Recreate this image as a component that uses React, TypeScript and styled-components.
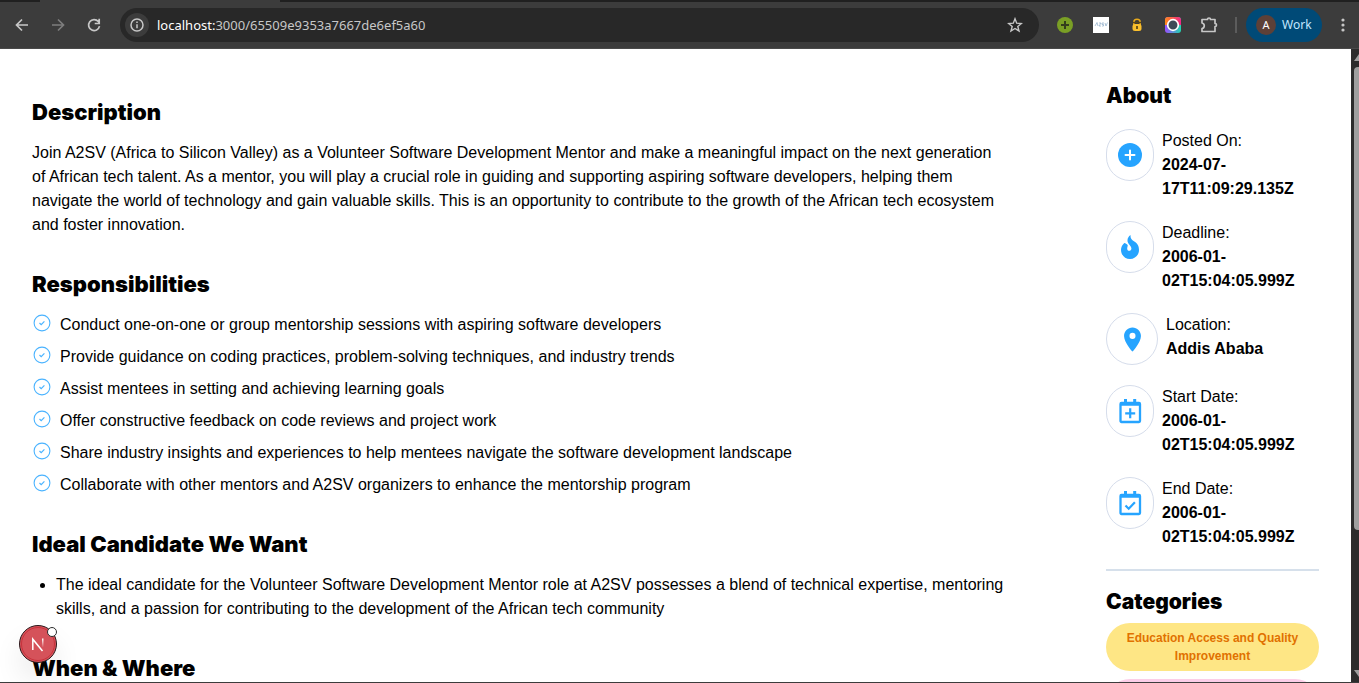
import React from "react";
import styled, { createGlobalStyle } from "styled-components";
import { MdLocationOn } from "react-icons/md";

const Global = createGlobalStyle`
  * { box-sizing: border-box; }
  body { margin: 0; background: #fff; color: #000; font-family: "Liberation Sans", Arial, sans-serif; font-size: 16px; line-height: 24px; }
  h2, p, ul, dl, dd, dt { margin: 0; padding: 0; }
  button { border: 0; padding: 0; background: none; font: inherit; color: inherit; }
`;

const Window = styled.div`
  height: 100vh;
  display: flex;
  flex-direction: column;
  overflow: hidden;
  border-bottom: 1px solid #3c3c3c;
`;

const TabStrip = styled.div`
  height: 2px;
  flex: none;
  display: flex;
  background: #202020;
`;

const ActiveTab = styled.div`
  margin-left: 40px;
  width: 240px;
  background: #3c3c3c;
`;

const Toolbar = styled.header`
  height: 47px;
  flex: none;
  display: flex;
  align-items: center;
  padding: 0 4px;
  background: #3c3c3c;
  border-bottom: 1px solid #4a4a4a;
  color: #c7c7c7;
`;

const NavButton = styled.button<{ $dim?: boolean }>`
  width: 36px;
  height: 34px;
  display: grid;
  place-items: center;
  color: ${(p) => (p.$dim ? "#7d7d7d" : "#c7c7c7")};
`;

const AddressBar = styled.div`
  flex: 1;
  height: 34px;
  margin: 0 8px;
  padding: 0 6px 0 5px;
  display: flex;
  align-items: center;
  gap: 8px;
  border-radius: 17px;
  background: #282828;
`;

const SiteInfo = styled.button`
  width: 24px;
  height: 24px;
  display: grid;
  place-items: center;
  border-radius: 50%;
  background: #3c3c3c;
`;

const Address = styled.div`
  flex: 1;
  font-family: "Noto Sans", "Open Sans", sans-serif;
  font-size: 13px;
  line-height: 20px;
  color: #c7c7c7;
  b { font-weight: 400; color: #fff; }
`;

const Profile = styled.button`
  height: 34px;
  width: 76px;
  margin: 0 9px;
  padding-left: 10px;
  display: flex;
  align-items: center;
  gap: 6px;
  border-radius: 17px;
  background: #004a77;
  color: #c2e7ff;
  font-family: "Noto Sans", sans-serif;
  font-size: 12px;
`;

const Avatar = styled.span`
  width: 20px;
  height: 20px;
  border-radius: 50%;
  background: #5d4037;
  color: #fff;
  font-size: 11px;
  line-height: 20px;
  text-align: center;
`;

const Divider = styled.span`
  width: 2px;
  height: 16px;
  margin-left: 8px;
  background: #5c5c5c;
`;

const MenuButton = styled.button`
  width: 24px;
  display: grid;
  place-items: center;
`;

const Body = styled.div`
  flex: 1;
  min-height: 0;
  display: flex;
`;

const Page = styled.div`
  flex: 1;
  min-width: 0;
  overflow: hidden;
  display: flex;
  gap: 100px;
  padding: 0 32px;
`;

const Main = styled.main`
  flex: 1;
  padding-top: 47px;
  display: flex;
  flex-direction: column;
  gap: 31px;
`;

const Heading = styled.h2<{ $side?: boolean }>`
  font-family: Inter, "Liberation Sans", sans-serif;
  font-size: ${(p) => (p.$side ? 21 : 22)}px;
  line-height: 32px;
  font-weight: 900;
`;

const Section = styled.section`
  display: flex;
  flex-direction: column;
  gap: 13px;
`;

const CheckList = styled.ul`
  list-style: none;
  display: flex;
  flex-direction: column;
  gap: 8px;
  li { display: flex; gap: 8px; }
`;

const BulletList = styled.ul`
  list-style: disc;
  padding-left: 24px;
`;

const Aside = styled.aside`
  flex: 0 0 213px;
  padding-top: 31px;
`;

const Facts = styled.dl`
  padding: 17px 0 20px;
  display: flex;
  flex-direction: column;
  gap: 20px;
`;

const Fact = styled.div`
  display: flex;
  align-items: flex-start;
  gap: 8px;
  dd { font-weight: 700; }
`;

const Ring = styled.span<{ $wide?: boolean }>`
  width: ${(p) => (p.$wide ? 52 : 48)}px;
  height: 52px;
  flex: none;
  display: grid;
  place-items: center;
  border: 1px solid #d6ddeb;
  border-radius: 26px;
  color: #26a4ff;
`;

const Categories = styled.section`
  padding-top: 15px;
  border-top: 2px solid #d6e0eb;
`;

const Pills = styled.div`
  padding-top: 5px;
  display: flex;
  flex-direction: column;
  gap: 8px;
`;

const Pill = styled.span<{ $bg: string; $fg: string }>`
  padding: 6px 16px;
  border-radius: 24px;
  background: ${(p) => p.$bg};
  color: ${(p) => p.$fg};
  min-height: 48px;
  font-size: 12px;
  line-height: 18px;
  font-weight: 700;
  text-align: center;
`;

const Scrollbar = styled.div`
  width: 8px;
  flex: none;
  display: flex;
  flex-direction: column;
  align-items: flex-end;
  background: #2c2c2c;
  svg { flex: none; display: block; }
`;

const Thumb = styled.div`
  width: 5px;
  flex: 463;
  border-radius: 4px 0 0 4px;
  background: #9f9f9f;
`;

const Track = styled.div`
  flex: 134;
`;

const DevBadge = styled.button`
  position: fixed;
  left: 19px;
  bottom: 20px;
  width: 38px;
  height: 38px;
  border-radius: 50%;
  box-shadow: 0 16px 32px -8px rgba(0, 0, 0, 0.24);
  svg { display: block; }
`;

const Check = () => (
  <svg width="20" height="20" viewBox="0 0 20 20" fill="none" stroke="#4ab3ff">
    <circle cx="10" cy="10" r="7.900" strokeWidth="1.100" />
    <path d="M7.500 10l1.700 1.600 3.200-3.200" strokeWidth="1.200" />
  </svg>
);

const PlusDisc = () => (
  <svg width="24" height="24" viewBox="0 0 24 24">
    <circle cx="12" cy="12" r="12" fill="currentColor" />
    <path d="M12 7.500v9M7.500 12h9" stroke="#fff" strokeWidth="2" strokeLinecap="round" />
  </svg>
);

const Calendar = ({ mark }: { mark: string }) => (
  <svg width="24" height="26" viewBox="0 0 24 26" fill="none" stroke="currentColor">
    <rect x="2.500" y="5" width="19.500" height="19" rx="1" strokeWidth="2.300" />
    <path d="M2.500 6.200h19.500M7.500 1v4M16.700 1v4" strokeWidth="3" />
    <path d={mark} strokeWidth="2.200" />
  </svg>
);

const Flame = () => (
  <svg width="24" height="26" viewBox="0 0 24 26" fill="currentColor">
    <path d="M12.600 1c-2.600 1.700-3.600 4.400-2.900 7 .8 2.600 3.600 3.900 3.700 6.300.1 1.600-1.100 2.500-2.200 2.500-1.400 0-2.100-1.200-2-2.700.1-1.100.6-1.800.5-3C8.600 9.900 7.600 9.300 6.300 9 4.300 10.700 3 13.200 3 15.800 3 21 6.900 25 12 25s9-4 9-9c0-6.200-3.600-7.600-6.500-9.700C12.800 5 12.300 3.100 12.600 1z" />
  </svg>
);

const duties = [
  "Conduct one-on-one or group mentorship sessions with aspiring software developers",
  "Provide guidance on coding practices, problem-solving techniques, and industry trends",
  "Assist mentees in setting and achieving learning goals",
  "Offer constructive feedback on code reviews and project work",
  "Share industry insights and experiences to help mentees navigate the software development landscape",
  "Collaborate with other mentors and A2SV organizers to enhance the mentorship program",
];

const facts = [
  { label: "Posted On:", value: "2024-07-17T11:09:29.135Z", icon: <PlusDisc /> },
  { label: "Deadline:", value: "2006-01-02T15:04:05.999Z", icon: <Flame /> },
  { label: "Location:", value: "Addis Ababa", icon: <MdLocationOn size={29} />, wide: true },
  { label: "Start Date:", value: "2006-01-02T15:04:05.999Z", icon: <Calendar mark="M12.200 10.300v10M7.200 15.300h10" /> },
  { label: "End Date:", value: "2006-01-02T15:04:05.999Z", icon: <Calendar mark="M7.500 15.500l3.200 3.200 6.200-6.500" /> },
];

function BrowserBar() {
  return (
    <>
      <TabStrip><ActiveTab /></TabStrip>
      <Toolbar>
        <NavButton aria-label="Back">
          <svg width="16" height="16" viewBox="0 0 16 16" fill="none" stroke="currentColor" strokeWidth="1.700"><path d="M14 8H3M8 2.500L2.500 8 8 13.500" /></svg>
        </NavButton>
        <NavButton aria-label="Forward" $dim>
          <svg width="16" height="16" viewBox="0 0 16 16" fill="none" stroke="currentColor" strokeWidth="1.700"><path d="M2 8h11M8 2.500L13.500 8 8 13.500" /></svg>
        </NavButton>
        <NavButton aria-label="Reload">
          <svg width="16" height="16" viewBox="0 0 16 16" fill="none" stroke="currentColor" strokeWidth="1.700"><path d="M13.500 9.200A5.500 5.500 0 1 1 12.300 4.500L13.300 5.700M13.200 1.800v4.700H8.700" /></svg>
        </NavButton>
        <AddressBar>
          <SiteInfo aria-label="Site information">
            <svg width="14" height="14" viewBox="0 0 14 14" fill="none" stroke="currentColor" strokeWidth="1.500"><circle cx="7" cy="7" r="6" /><path d="M7 6.200v4M7 3.500v1.500" /></svg>
          </SiteInfo>
          <Address><b>localhost:</b>3000/65509e9353a7667de6ef5a60</Address>
          <NavButton aria-label="Bookmark">
            <svg width="16" height="16" viewBox="0 0 16 16" fill="none" stroke="currentColor" strokeWidth="1.400"><path d="M8 1.800l1.700 4.400 4.700.3-3.600 3 1.200 4.500L8 11.500 4 14l1.200-4.500-3.600-3 4.700-.3z" /></svg>
          </NavButton>
        </AddressBar>
        <NavButton aria-label="Add">
          <svg width="16" height="16" viewBox="0 0 16 16"><circle cx="8" cy="8" r="8" fill="#7a9f25" /><path d="M8 4v8M4 8h8" stroke="#343e1c" strokeWidth="2" /></svg>
        </NavButton>
        <NavButton aria-label="A2SV">
          <svg width="16" height="16" viewBox="0 0 16 16"><path d="M0 0h16v16H0z" fill="#fff" /><path d="M2 9l2-3.500L5 9M6 6h2L6 9h2M11 6H9v1.500h1.500V9H9M12 6l1 3 1.500-3.500" fill="none" stroke="#8aa9c6" strokeWidth=".7" /></svg>
        </NavButton>
        <NavButton aria-label="Lock">
          <svg width="16" height="16" viewBox="0 0 16 16"><path d="M4.800 8V5.500a3.200 3.200 0 0 1 6.400 0V8" fill="none" stroke="#e7a91c" strokeWidth="1.600" /><path d="M4 5.500h8" stroke="#5a4515" strokeWidth="1.400" /><rect x="3.500" y="7" width="9" height="7" rx="2.500" fill="#fbc02d" /><path d="M8 9v3" stroke="#4b3a14" strokeWidth="1.600" /></svg>
        </NavButton>
        <NavButton aria-label="Screen capture">
          <svg width="16" height="16" viewBox="0 0 16 16">
            <defs>
              <linearGradient id="warm" x1="0" y1="0" x2="1" y2="0"><stop offset="0" stopColor="#ff8a1a" /><stop offset="1" stopColor="#f0268a" /></linearGradient>
              <linearGradient id="cool" x1="0" y1="0" x2="1" y2="0"><stop offset="0" stopColor="#9a4dff" /><stop offset="1" stopColor="#20d8b0" /></linearGradient>
            </defs>
            <rect width="16" height="16" rx="3" fill="url(#cool)" />
            <path d="M3 0h10a3 3 0 0 1 3 3v5H0V3a3 3 0 0 1 3-3z" fill="url(#warm)" />
            <circle cx="8" cy="8" r="5.300" fill="#3d4a58" stroke="#fff" strokeWidth="1.700" />
          </svg>
        </NavButton>
        <NavButton aria-label="Extensions">
          <svg width="18" height="18" viewBox="0 0 18 18" fill="none" stroke="currentColor" strokeWidth="1.700" strokeLinejoin="round"><path d="M2 3.500h5.500a1.500 1.500 0 0 1 3 0H15v4a1.500 1.500 0 0 1 0 3V15.500H2v-3a2.800 2.800 0 0 0 0-5.500z" /></svg>
        </NavButton>
        <Divider />
        <Profile><Avatar>A</Avatar>Work</Profile>
        <MenuButton aria-label="Menu">
          <svg width="24" height="18" viewBox="0 0 24 18" fill="#c7c7c7"><circle cx="12" cy="4" r="1.600" /><circle cx="12" cy="9" r="1.600" /><circle cx="12" cy="14" r="1.600" /></svg>
        </MenuButton>
      </Toolbar>
    </>
  );
}

export default function App() {
  return (
    <Window>
      <Global />
      <BrowserBar />
      <Body>
        <Page>
          <Main>
            <Section>
              <Heading>Description</Heading>
              <p>Join A2SV (Africa to Silicon Valley) as a Volunteer Software Development Mentor and make a meaningful impact on the next generation of African tech talent. As a mentor, you will play a crucial role in guiding and supporting aspiring software developers, helping them navigate the world of technology and gain valuable skills. This is an opportunity to contribute to the growth of the African tech ecosystem and foster innovation.</p>
            </Section>
            <Section>
              <Heading>Responsibilities</Heading>
              <CheckList>
                {duties.map((d) => <li key={d}><Check />{d}</li>)}
              </CheckList>
            </Section>
            <Section>
              <Heading>Ideal Candidate We Want</Heading>
              <BulletList>
                <li>The ideal candidate for the Volunteer Software Development Mentor role at A2SV possesses a blend of technical expertise, mentoring skills, and a passion for contributing to the development of the African tech community</li>
              </BulletList>
            </Section>
            <Section>
              <Heading>When &amp; Where</Heading>
            </Section>
          </Main>
          <Aside>
            <Heading $side>About</Heading>
            <Facts>
              {facts.map((f) => (
                <Fact key={f.label}>
                  <Ring $wide={f.wide}>{f.icon}</Ring>
                  <div><dt>{f.label}</dt><dd>{f.value}</dd></div>
                </Fact>
              ))}
            </Facts>
            <Categories>
              <Heading $side>Categories</Heading>
              <Pills>
                <Pill $bg="#fee685" $fg="#e17100">Education Access and Quality Improvement</Pill>
                <Pill $bg="#fccee8" $fg="#e60076" />
              </Pills>
            </Categories>
          </Aside>
        </Page>
        <Scrollbar>
          <svg width="5" height="18" viewBox="0 0 5 18"><path d="M0 12L5 5v7z" fill="#9f9f9f" /></svg>
          <Thumb />
          <Track />
          <svg width="5" height="18" viewBox="0 0 5 18"><path d="M0 6h5v7z" fill="#9f9f9f" /></svg>
        </Scrollbar>
      </Body>
      <DevBadge aria-label="Open Next.js Dev Tools">
        <svg width="38" height="38" viewBox="0 0 38 38">
          <defs>
            <linearGradient id="fade" x1="0" y1="0" x2="0" y2="1"><stop offset="0" stopColor="#fff" /><stop offset="1" stopColor="#fff" stopOpacity="0" /></linearGradient>
          </defs>
          <circle cx="19" cy="19" r="18.500" fill="#d5525a" stroke="#2b1a1c" />
          <circle cx="19" cy="19" r="16.500" fill="none" stroke="#c8323c" />
          <path d="M13.800 25V14.200L23.500 26" fill="none" stroke="#fff" strokeWidth="1.500" />
          <rect x="23" y="13.500" width="1.500" height="9" fill="url(#fade)" />
          <circle cx="33" cy="7" r="4.500" fill="#fff" stroke="#2b2b2b" />
        </svg>
      </DevBadge>
    </Window>
  );
}
